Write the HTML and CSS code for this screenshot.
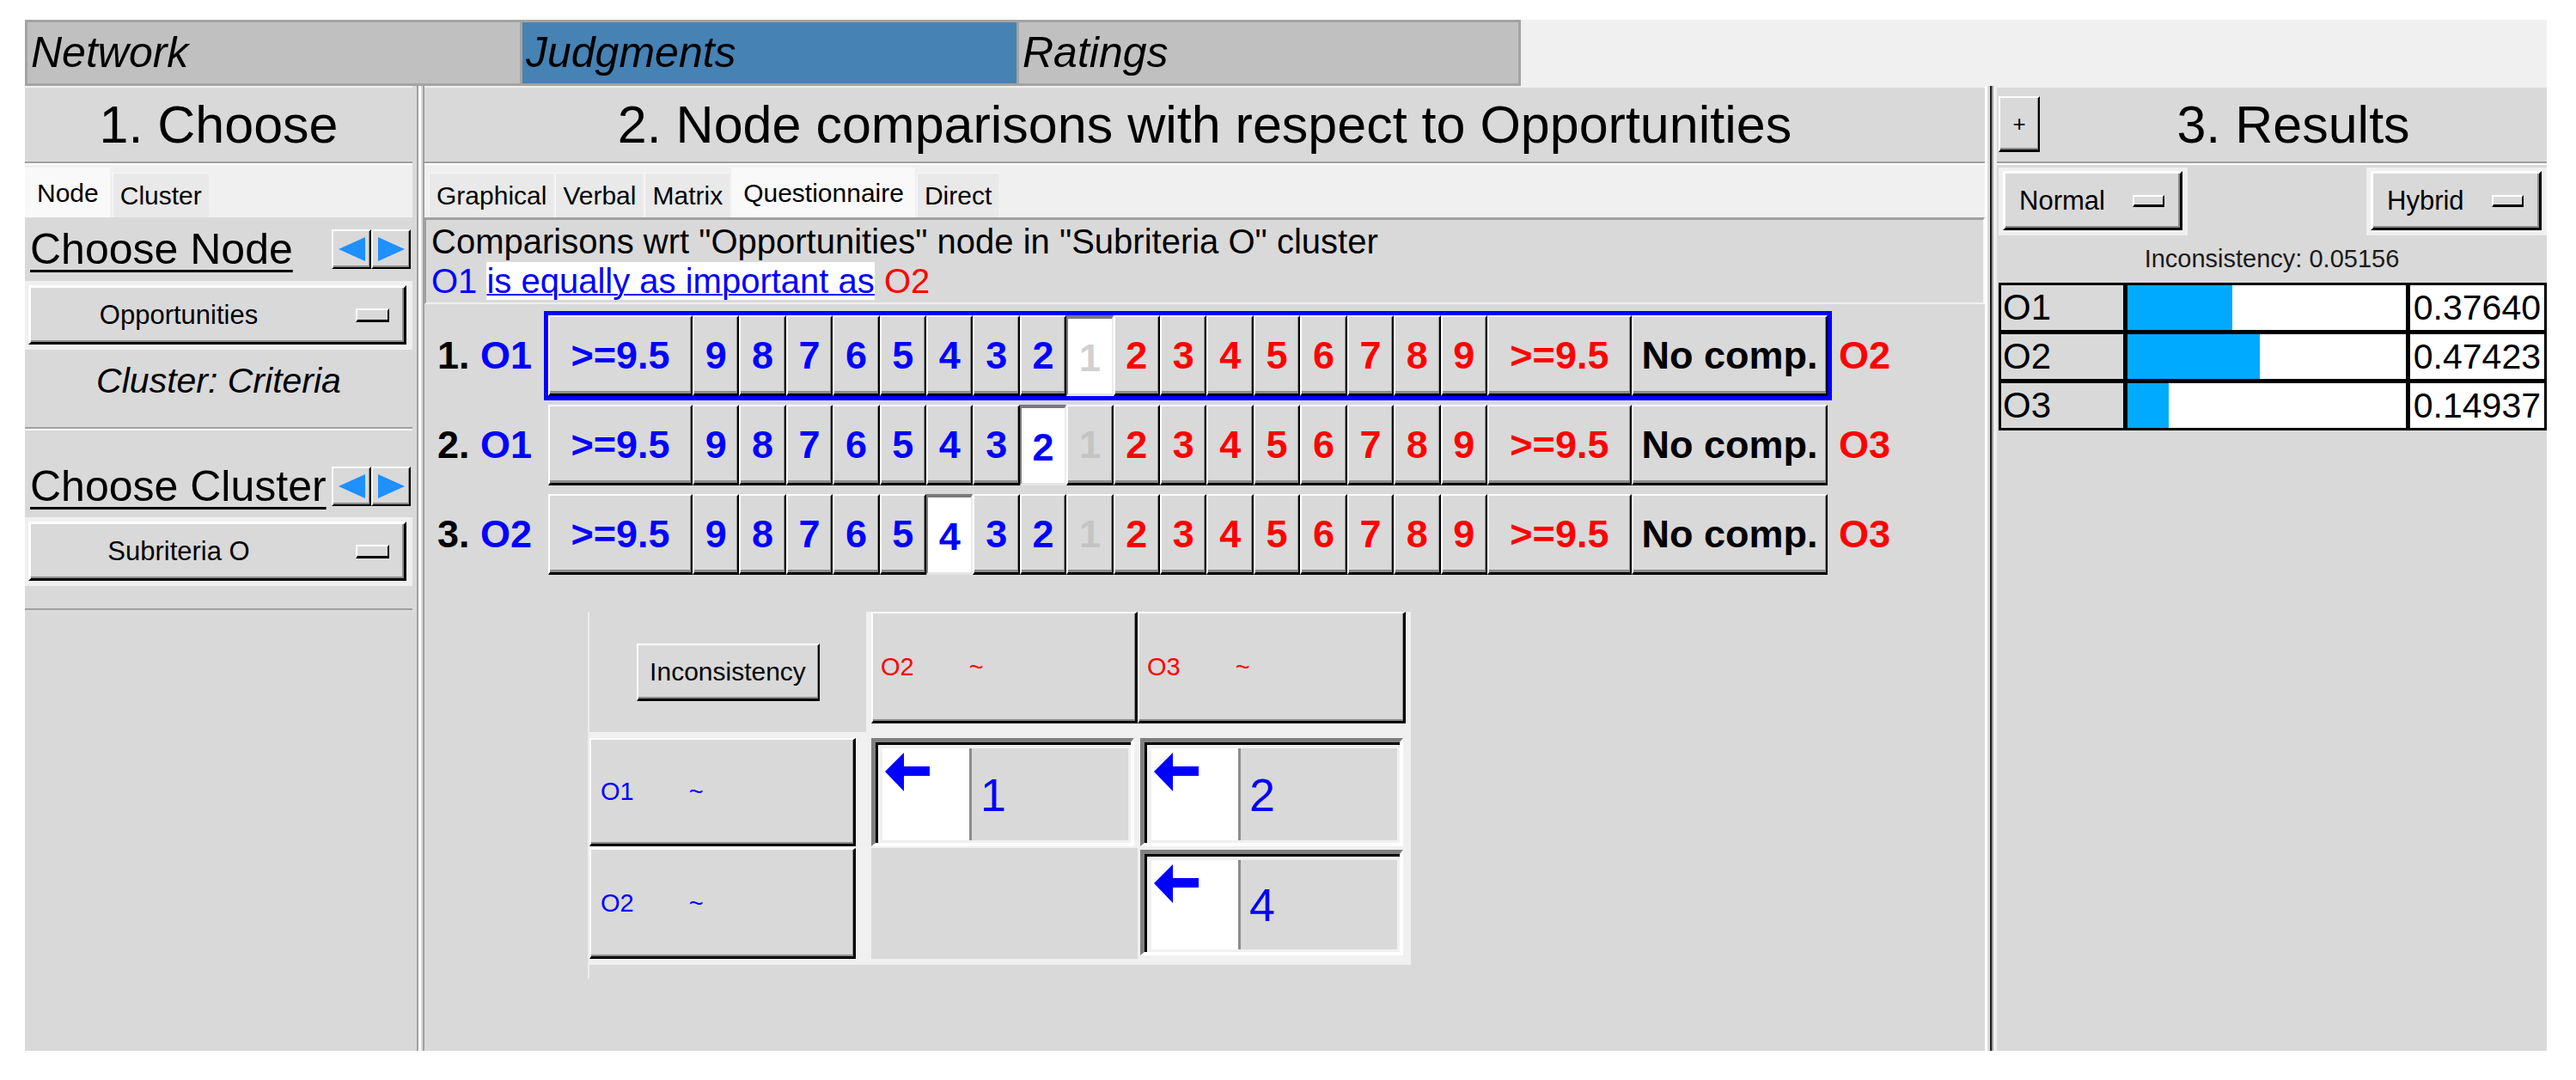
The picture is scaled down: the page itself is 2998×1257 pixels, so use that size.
FILE: index.html
```html
<!DOCTYPE html>
<html>
<head>
<meta charset="utf-8">
<link rel="stylesheet" href="styles.css">
</head>
<body>
<div class="app">
  <div class="topbar">
    <div class="ttabs">
      <div class="ttab t1">Network</div>
      <div class="ttab t2 sel">Judgments</div>
      <div class="ttab t3">Ratings</div>
    </div>
  </div>
  <div class="main">
    <section class="panel p-left">
      <div class="phead">1. Choose</div>
      <div class="tabstrip">
        <div class="tab sel">Node</div>
        <div class="tab">Cluster</div>
      </div>
      <div class="node-sec">
        <div class="chooser">
          <span class="ch-title">Choose Node</span>
          <div class="arrows">
            <div class="ab"><svg width="31" height="28" viewBox="0 0 31 28"><polygon points="0,14 31,0 31,28" fill="#1e90ff"/></svg></div>
            <div class="ab"><svg width="31" height="28" viewBox="0 0 31 28"><polygon points="31,14 0,0 0,28" fill="#1e90ff"/></svg></div>
          </div>
        </div>
        <div class="ddwrap"><div class="dd"><span class="lbl">Opportunities</span><i class="ind"></i></div></div>
        <div class="cl-label">Cluster: Criteria</div>
      </div>
      <div class="clu-sec">
        <div class="chooser c2">
          <span class="ch-title">Choose Cluster</span>
          <div class="arrows">
            <div class="ab"><svg width="31" height="28" viewBox="0 0 31 28"><polygon points="0,14 31,0 31,28" fill="#1e90ff"/></svg></div>
            <div class="ab"><svg width="31" height="28" viewBox="0 0 31 28"><polygon points="31,14 0,0 0,28" fill="#1e90ff"/></svg></div>
          </div>
        </div>
        <div class="ddwrap"><div class="dd"><span class="lbl">Subriteria O</span><i class="ind"></i></div></div>
      </div>
    </section>
    <div class="vdiv1"></div>
    <section class="panel p-mid">
      <div class="phead">2. Node comparisons with respect to Opportunities</div>
      <div class="tabstrip mt">
        <div class="tab">Graphical</div>
        <div class="tab">Verbal</div>
        <div class="tab">Matrix</div>
        <div class="tab sel">Questionnaire</div>
        <div class="tab">Direct</div>
      </div>
      <div class="qbox">
        <div class="qline">Comparisons wrt "Opportunities" node in "Subriteria O" cluster</div>
        <div class="qline"><span class="blue">O1</span> <span class="hl">is equally as important as</span> <span class="red">O2</span></div>
      </div>
      <div class="rows">
        <div class="crow">
          <div class="clabel">1. <span class="blue">O1</span></div>
          <div class="strip active">
            <div class="b wide l">&gt;=9.5</div>
            <div class="b l">9</div><div class="b l">8</div><div class="b l">7</div><div class="b l">6</div><div class="b l">5</div><div class="b l">4</div><div class="b l">3</div><div class="b l">2</div>
            <div class="b one sel">1</div>
            <div class="b r">2</div><div class="b r">3</div><div class="b r">4</div><div class="b r">5</div><div class="b r">6</div><div class="b r">7</div><div class="b r">8</div><div class="b r">9</div>
            <div class="b wide r">&gt;=9.5</div>
            <div class="b nc">No comp.</div>
          </div>
          <div class="rlabel">O2</div>
        </div>
        <div class="crow">
          <div class="clabel">2. <span class="blue">O1</span></div>
          <div class="strip">
            <div class="b wide l">&gt;=9.5</div>
            <div class="b l">9</div><div class="b l">8</div><div class="b l">7</div><div class="b l">6</div><div class="b l">5</div><div class="b l">4</div><div class="b l">3</div><div class="b l sel">2</div>
            <div class="b one">1</div>
            <div class="b r">2</div><div class="b r">3</div><div class="b r">4</div><div class="b r">5</div><div class="b r">6</div><div class="b r">7</div><div class="b r">8</div><div class="b r">9</div>
            <div class="b wide r">&gt;=9.5</div>
            <div class="b nc">No comp.</div>
          </div>
          <div class="rlabel">O3</div>
        </div>
        <div class="crow">
          <div class="clabel">3. <span class="blue">O2</span></div>
          <div class="strip">
            <div class="b wide l">&gt;=9.5</div>
            <div class="b l">9</div><div class="b l">8</div><div class="b l">7</div><div class="b l">6</div><div class="b l">5</div><div class="b l sel">4</div><div class="b l">3</div><div class="b l">2</div>
            <div class="b one">1</div>
            <div class="b r">2</div><div class="b r">3</div><div class="b r">4</div><div class="b r">5</div><div class="b r">6</div><div class="b r">7</div><div class="b r">8</div><div class="b r">9</div>
            <div class="b wide r">&gt;=9.5</div>
            <div class="b nc">No comp.</div>
          </div>
          <div class="rlabel">O3</div>
        </div>
      </div>
      <div class="mwrap">
        <div class="matrix">
          <div class="corner"><div class="ibtn">Inconsistency</div></div>
          <div class="hdr colh c2"><span class="red">O2</span><span class="tl red">~</span></div>
          <div class="hdr colh c3"><span class="red">O3</span><span class="tl red">~</span></div>
          <div class="hdr rowh r1"><span class="blue">O1</span><span class="tl blue">~</span></div>
          <div class="hdr rowh r2"><span class="blue">O2</span><span class="tl blue">~</span></div>
          <div class="cell ca">
            <div class="wbox"><svg width="52" height="46" viewBox="0 0 52 46"><path d="M0 22 L22 0 L22 16 L52 16 L52 27 L22 27 L22 45 Z" fill="#0000ff"/></svg></div>
            <div class="val">1</div>
          </div>
          <div class="cell cb">
            <div class="wbox"><svg width="52" height="46" viewBox="0 0 52 46"><path d="M0 22 L22 0 L22 16 L52 16 L52 27 L22 27 L22 45 Z" fill="#0000ff"/></svg></div>
            <div class="val">2</div>
          </div>
          <div class="empty"></div>
          <div class="cell cc">
            <div class="wbox"><svg width="52" height="46" viewBox="0 0 52 46"><path d="M0 22 L22 0 L22 16 L52 16 L52 27 L22 27 L22 45 Z" fill="#0000ff"/></svg></div>
            <div class="val">4</div>
          </div>
        </div>
      </div>
    </section>
    <div class="vdiv2"></div>
    <section class="panel p-right">
      <div class="phead rhead">
        <div class="plus">+</div>
        <div class="rtitle">3. Results</div>
      </div>
      <div class="ctrls">
        <div class="cwrap"><div class="dd small n"><span class="lbl">Normal</span><i class="ind sm"></i></div></div>
        <div class="cwrap"><div class="dd small h"><span class="lbl">Hybrid</span><i class="ind sm"></i></div></div>
      </div>
      <div class="incline">Inconsistency: 0.05156</div>
      <div class="rtable">
        <div class="rn">O1</div><div class="rb"><div class="fill" style="width:37.64%"></div></div><div class="rv">0.37640</div>
        <div class="rn">O2</div><div class="rb"><div class="fill" style="width:47.42%"></div></div><div class="rv">0.47423</div>
        <div class="rn">O3</div><div class="rb"><div class="fill" style="width:14.94%"></div></div><div class="rv">0.14937</div>
      </div>
    </section>
  </div>
</div>
</body>
</html>
```

FILE: styles.css
```css
* { box-sizing: border-box; margin: 0; padding: 0; }
html, body { background: #fff; }
body { font-family: "Liberation Sans", Arial, sans-serif; color: #000; }

.blue { color: #0000ff; }
.red { color: #ff0000; }

.app { margin: 23px 0 0 29px; width: 2935px; height: 1200px; display: flex; flex-direction: column; }

/* top bar */
.topbar { height: 77px; background: #f0f0f0; display: flex; }
.ttabs { display: flex; gap: 3px; background: #a3a3a3; border: 3px solid #a3a3a3; }
.ttab { background: #c0c0c0; font-style: italic; font-size: 50px; line-height: 71px; padding-left: 4px; }
.ttab.t1 { width: 573px; }
.ttab.t2 { width: 575px; }
.ttab.t3 { width: 581px; }
.ttab.sel { background: #4682b4; }

/* main */
.main { flex: 1; display: flex; background: #d9d9d9; }
.panel { display: flex; flex-direction: column; }
.p-left { width: 451px; }
.p-mid { width: 1816px; }
.p-right { width: 640px; }
.vdiv1 { width: 14px; background: linear-gradient(90deg, #d9d9d9 0 5px, #a0a0a0 5px 7px, #fff 7px 10px, #d9d9d9 10px 12px, #a0a0a0 12px 14px); }
.vdiv2 { width: 14px; background: linear-gradient(90deg, #fff 0 3px, #d9d9d9 3px 6px, #1a1a1a 6px 8px, #a0a0a0 8px 10px, #f0f0f0 10px 14px); }

.phead { height: 90px; border-top: 2px solid #f0f0f0; border-bottom: 2px solid #a0a0a0; font-size: 61px; line-height: 86px; text-align: center; }

/* tab strips */
.tabstrip { height: 63px; border-top: 2px solid #fff; background: #f0f0f0; display: flex; align-items: flex-end; gap: 3px; }
.tabstrip.mt { padding-left: 5px; gap: 2px; }
.tab { height: 52px; line-height: 52px; padding: 0 8px; font-size: 30px; background: #e9e9e9; border-top: 1px solid #f8f8f8; border-left: 1px solid #f8f8f8; }
.tab.sel { height: 58px; line-height: 58px; padding: 0 13px; background: #f9f9f9; }

/* left panel */
.node-sec { height: 246px; border-bottom: 2px solid #a0a0a0; }
.clu-sec { border-top: 2px solid #fff; border-bottom: 2px solid #a0a0a0; padding-bottom: 26px; }
.chooser { display: flex; align-items: center; padding: 14px 2px 14px 0; height: 74px; }
.chooser.c2 { padding-top: 42px; padding-bottom: 13px; height: 101px; }
.ch-title { font-size: 50px; line-height: 46px; margin-left: 6px; text-decoration: underline; text-decoration-thickness: 3px; text-underline-offset: 7px; }
.arrows { display: flex; margin-left: auto; }
.ab { width: 46px; height: 46px; display: flex; align-items: center; justify-content: center; background: #d9d9d9; border-top: 2px solid #fff; border-left: 2px solid #fff; border-right: 2px solid #000; border-bottom: 2px solid #000; box-shadow: inset -1px -2px 0 #8c8c8c; }

.ddwrap { background: #f0f0f0; padding: 5px 7px 6px 4px; height: 80px; }
.dd { height: 69px; display: flex; align-items: center; background: #d9d9d9; border-top: 3px solid #fff; border-left: 3px solid #fff; border-right: 3px solid #000; border-bottom: 3px solid #000; box-shadow: inset -2px -2px 0 #8c8c8c; font-size: 31px; }
.dd .lbl { flex: 1; text-align: center; }
.ind { display: block; width: 39px; height: 16px; background: #d9d9d9; border-top: 2px solid #fff; border-left: 2px solid #fff; border-right: 2px solid #000; border-bottom: 3px solid #000; margin: 0 17px 0 34px; }
.cl-label { font-style: italic; font-size: 41px; text-align: center; padding-top: 13px; }

/* middle panel */
.qbox { border-top: 3px solid #a0a0a0; border-left: 2px solid #a0a0a0; border-right: 2px solid #f8f8f8; border-bottom: 2px solid #f0f0f0; padding: 2px 0 1px 6px; font-size: 40px; }
.qline { line-height: 47px; }
.qline:first-child { line-height: 46px; }
.hl { background: #fff; color: #0000ff; text-decoration: underline; text-decoration-thickness: 2px; }

.rows { padding: 8px 0 0 15px; }
.crow { display: flex; align-items: center; height: 104px; }
.clabel { width: 124px; font-weight: bold; font-size: 45px; }
.strip { display: flex; border: 5px solid transparent; width: 1499px; }
.strip.active { border-color: #0000ff; }
.b { flex: 1; height: 94px; display: flex; align-items: center; justify-content: center; background: #d9d9d9; border-top: 2px solid #fff; border-left: 2px solid #fff; border-right: 2px solid #000; border-bottom: 3px solid #000; box-shadow: inset -1px -3px 0 #8c8c8c; font-weight: bold; font-size: 45px; }
.b.wide { flex: 0 0 168px; }
.b.nc { flex: 0 0 228px; }
.b.l { color: #0000ff; }
.b.r { color: #ff0000; }
.b.one { color: #c4c4c4; }
.b.sel { background: #fff; border-top: 4px solid #7a7a7a; border-left: 2px solid #7a7a7a; border-right: 2px solid #ececec; border-bottom: 3px solid #e4e4e4; box-shadow: none; padding-top: 4px; }
.b.one.sel { color: #d0d0d0; }
.rlabel { margin-left: 8px; font-weight: bold; font-size: 45px; color: #ff0000; }

/* matrix */
.mwrap { margin: 38px 0 0 190px; border-left: 2px solid #ececec; padding-bottom: 16px; align-self: flex-start; }
.matrix { display: grid; grid-template-columns: 322px 6px 310px 312px; grid-template-rows: 140px 7px 126px 2px 129px; background: #f0f0f0; padding: 0 6px 7px 0; }
.corner { grid-area: 1 / 1 / 2 / 2; background: #d9d9d9; display: flex; align-items: center; justify-content: center; }
.ibtn { width: 213px; height: 67px; display: flex; align-items: center; justify-content: center; font-size: 30px; background: #d9d9d9; border-top: 2px solid #fff; border-left: 2px solid #fff; border-right: 2px solid #000; border-bottom: 3px solid #000; box-shadow: inset -1px -2px 0 #8c8c8c; }
.hdr { display: flex; align-items: center; padding-left: 9px; font-size: 29px; background: #d9d9d9; border-top: 2px solid #fff; border-left: 2px solid #fff; border-right: 3px solid #000; border-bottom: 3px solid #000; box-shadow: inset -1px -2px 0 #8c8c8c; }
.tl { margin-left: 64px; }
.colh { height: 130px; }
.colh.c2 { grid-area: 1 / 3 / 2 / 4; }
.colh.c3 { grid-area: 1 / 4 / 2 / 5; }
.rowh { width: 310px; padding-left: 11px; }
.rowh.r1 { grid-area: 3 / 1 / 4 / 2; }
.rowh.r2 { grid-area: 5 / 1 / 6 / 2; }
.empty { grid-area: 5 / 3 / 6 / 4; background: #d9d9d9; }
.cell { display: flex; width: 306px; background: #f0f0f0; border-style: solid; border-width: 5px 4px 4px 5px; border-color: #808080 #fff #fff #808080; box-shadow: inset 3px 3px 0 #000; padding: 7px 3px 3px 8px; }
.cell.ca { grid-area: 3 / 3 / 4 / 4; }
.cell.cb { grid-area: 3 / 4 / 4 / 5; margin-left: 3px; }
.cell.cc { grid-area: 5 / 4 / 6 / 5; margin: 2px 0 4px 3px; }
.wbox { width: 104px; background: #fff; border-right: 3px solid #8c8c8c; padding: 5px 0 0 3px; }
.wbox svg { display: block; }
.val { flex: 1; background: #d9d9d9; color: #0000ff; font-size: 54px; display: flex; align-items: center; padding-left: 10px; }

/* right panel */
.rhead { display: flex; align-items: flex-start; }
.plus { width: 48px; height: 65px; margin: 10px 0 0 2px; display: flex; align-items: center; justify-content: center; font-size: 26px; background: #d9d9d9; border-top: 2px solid #fff; border-left: 2px solid #fff; border-right: 2px solid #000; border-bottom: 3px solid #000; box-shadow: inset -1px -2px 0 #8c8c8c; }
.rtitle { flex: 1; text-align: center; }
.ctrls { display: flex; justify-content: space-between; padding: 3px 0 0 2px; border-top: 2px solid #fff; }
.cwrap { background: #f0f0f0; padding: 4px 6px 6px 5px; }
.dd.small .lbl { text-align: left; padding-left: 16px; }
.dd.n { width: 209px; }
.dd.h { width: 199px; }
.ind.sm { width: 37px; height: 14px; margin: 0 18px 0 auto; }
.incline { text-align: center; font-size: 29px; line-height: 55px; color: #1a1a1a; }
.rtable { display: grid; grid-template-columns: 142px 324px 156px; grid-auto-rows: 52px; gap: 5px; padding: 3px; background: #000; margin-left: 2px; width: 638px; }
.rn { background: #d9d9d9; font-size: 42px; line-height: 52px; padding-left: 2px; }
.rb { background: #fff; }
.fill { height: 100%; background: #00aaff; }
.rv { background: #fff; font-size: 41px; line-height: 52px; text-align: right; padding-right: 4px; }
```
